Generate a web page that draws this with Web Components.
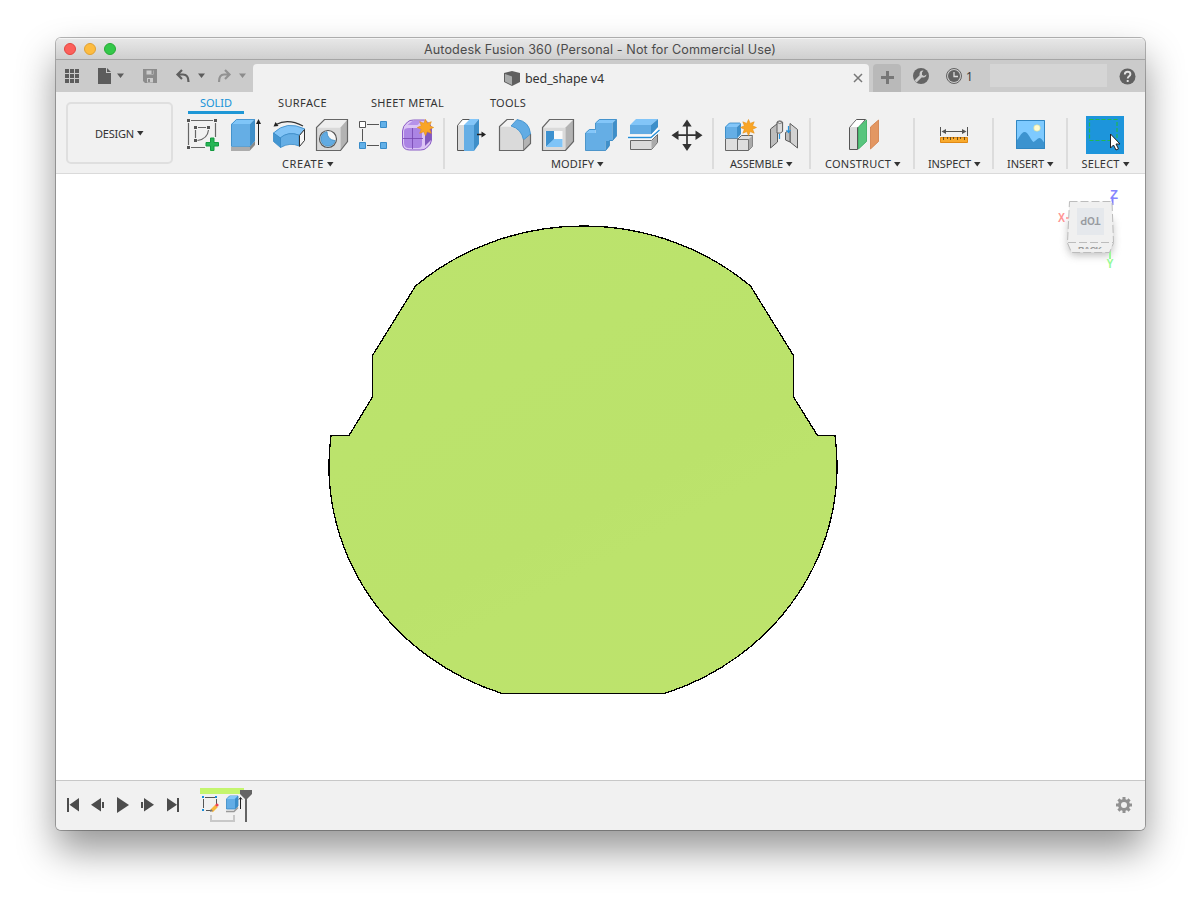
<!DOCTYPE html>
<html lang="en">
<head>
<meta charset="utf-8">
<title>Autodesk Fusion 360</title>
<style>
html,body{margin:0;background:#fff;height:904px;overflow:hidden}
body{font-family:"Noto Sans","Open Sans",sans-serif;padding:38px 56px 0;box-sizing:border-box}
</style>
</head>
<body>
<app-window>
  <title-bar><fit-label w="352">Autodesk Fusion 360 (Personal - Not for Commercial Use)</fit-label></title-bar>
  <quick-bar></quick-bar>
  <ribbon-bar>
    <ribbon-group style="width:270px" shift="-2"><fit-label slot="label" w="42">CREATE</fit-label>
      <tool-icon name="sketch" x="181"></tool-icon><tool-icon name="extrude" x="224"></tool-icon><tool-icon name="revolve" x="267"></tool-icon><tool-icon name="hole" x="310"></tool-icon><tool-icon name="pattern" x="353"></tool-icon><tool-icon name="form" x="396"></tool-icon>
    </ribbon-group>
    <ribbon-group style="width:269px" shift="-2"><fit-label slot="label" w="43">MODIFY</fit-label>
      <tool-icon name="press" x="451"></tool-icon><tool-icon name="fillet" x="494"></tool-icon><tool-icon name="shell" x="537"></tool-icon><tool-icon name="combine" x="580"></tool-icon><tool-icon name="split" x="623"></tool-icon><tool-icon name="move" x="666"></tool-icon>
    </ribbon-group>
    <ribbon-group style="width:97px" shift="-1"><fit-label slot="label" w="53">ASSEMBLE</fit-label>
      <tool-icon name="component" x="720"></tool-icon><tool-icon name="joint" x="763"></tool-icon>
    </ribbon-group>
    <ribbon-group style="width:104px"><fit-label slot="label" w="66">CONSTRUCT</fit-label><tool-icon name="plane" x="841"></tool-icon></ribbon-group>
    <ribbon-group style="width:79px"><fit-label slot="label" w="43">INSPECT</fit-label><tool-icon name="measure" x="933"></tool-icon></ribbon-group>
    <ribbon-group style="width:74px" shift="-0.5"><fit-label slot="label" w="37">INSERT</fit-label><tool-icon name="picture" x="1010"></tool-icon></ribbon-group>
    <ribbon-group style="width:75px" last><fit-label slot="label" w="38">SELECT</fit-label><tool-icon name="select" x="1084"></tool-icon></ribbon-group>
  </ribbon-bar>
  <model-view></model-view>
  <time-line></time-line>
</app-window>

<script>
const define=(name,html,ready)=>{
  const t=document.createElement('template');t.innerHTML=html;
  customElements.define(name,class extends HTMLElement{
    connectedCallback(){
      if(this.shadowRoot)return;
      this.attachShadow({mode:'open'}).append(t.content.cloneNode(true));
      if(ready)ready(this,this.shadowRoot);
    }
  });
};

define('app-window',`<style>
:host{display:flex;flex-direction:column;width:1089px;height:792px;border-radius:5px;background:#f1f1f1;box-shadow:0 0 0 1px rgba(0,0,0,.28),0 20px 38px rgba(0,0,0,.42);overflow:hidden;color:#3a3a3a}
</style><slot></slot>`);

define('title-bar',`<style>
:host{display:grid;grid-template-columns:66px 1fr 66px;align-items:center;height:21px;flex:none;background:linear-gradient(#e8e8e8,#cfcfcf);box-shadow:inset 0 1px #f5f5f5;border-bottom:1px solid #a5a5a5;font:12.6px Inter,sans-serif;color:#4b4b4b}
.lights{display:flex;gap:8px;padding-left:8px}
i{width:12px;height:12px;border-radius:50%;box-sizing:border-box;border:1px solid #e2463f;background:#fc605b}
i:nth-child(2){background:#fdbc40;border-color:#dfa033}i:nth-child(3){background:#34c84a;border-color:#27aa35}
.t{display:flex;justify-content:center;padding:1px 1px 0 0}
</style><div class="lights"><i></i><i></i><i></i></div><div class="t"><slot></slot></div><span></span>`);

define('quick-bar',`<style>
:host{display:flex;height:32px;flex:none;background:#cbcbcb;align-items:flex-end}
svg{display:block;flex:none}
.tab{width:616px;flex:none;height:28px;background:#f1f1f1;border-radius:4px 4px 0 0;display:flex;align-items:center;box-sizing:border-box;padding:0 6px 0 251px;font-size:12.5px;color:#333}
.tab svg{margin-right:4px}.tab .x{margin:0 0 0 auto}
.new{margin-left:4px;width:28px;flex:none;height:28px;background:#b9b9b9;border-radius:4px 4px 0 0}
.right{display:flex;align-items:center;height:32px;flex:1;box-sizing:border-box;padding:0 0 0 11px;font-size:12px}
.search{width:117px;flex:none;height:23px;background:#d5d5d5;margin:-1px 12px 0 0}
.n{margin-left:3px;width:24px;flex:none;font-family:"Noto Sans",sans-serif}
</style>
<svg width="197" height="32" viewBox="56 60 197 32">
<g fill="#5c5c5c"><path d="M65 69h4v4h-4zM70 69h4v4h-4zM75 69h4v4h-4zM65 74h4v4h-4zM70 74h4v4h-4zM75 74h4v4h-4zM65 79h4v4h-4zM70 79h4v4h-4zM75 79h4v4h-4z"/>
<path d="M98 68h8v5h5v11H98zM107 68l4 4h-4zM117 73.500h7l-3.500 4.500zM198 73.500h7l-3.500 4.500z"/></g>
<g fill="#8c8c8c"><path d="M143 69h14v14h-12l-2-2z"/><path fill="#cbcbcb" d="M146.500 70.500h7v4h-7zM147 78h6v4.500h-6z"/><path d="M151.500 70h1.500v4h-1.500zM148 79h2v3h-2zM239 73.500h7l-3.500 4.500z"/></g>
<g fill="none" stroke="#5f5f5f" stroke-width="2.200"><path d="M182 70l-4.500 4.500 4.500 4.500M178.500 74.500h4.500q5.500 0 5.500 7.500"/><path stroke="#929292" d="M225 70l4.500 4.500-4.500 4.500M228.500 74.500h-4.500q-5 0-5 7.500"/></g></svg>
<div class="tab"><svg width="17" height="17" viewBox="0 0 17 17"><path fill="#5f5f5f" d="M0 3l8-2 8 2v9l-8 4-8-4z"/><path fill="#a9abab" d="M1 4l7 2.500v8.500L1 11.500z"/></svg><fit-label w="79">bed_shape v4</fit-label>
<svg class="x" width="10" height="10" viewBox="0 0 10 10"><path d="M1 1l8 8M9 1l-8 8" stroke="#777" stroke-width="1.500"/></svg></div>
<div class="new"><svg width="28" height="28"><path d="M8 13.500h13M14.500 7v13" stroke="#777" stroke-width="3"/></svg></div>
<div class="right">
<svg width="18" height="18" viewBox="0 0 18 18"><circle cx="9" cy="9" r="8" fill="#646464"/><path d="M4.500 13.500L9 9" stroke="#cbcbcb" stroke-width="3" stroke-linecap="round"/><path d="M11.500 3.500a3.500 3.500 0 1 0 3 4l-2.500 1.500-2-1v-2.500z" fill="#cbcbcb"/></svg>
<svg style="margin-left:15px" width="18" height="18" viewBox="0 0 18 18"><circle cx="9" cy="9" r="7.500" fill="none" stroke="#626262"/><circle cx="9" cy="9" r="6" fill="#626262"/><path d="M9 5v4.500h4" fill="none" stroke="#ddd" stroke-width="1.300"/></svg>
<span class="n">1</span><div class="search"></div>
<svg width="17" height="17" viewBox="0 0 17 17"><circle cx="8.500" cy="8.500" r="8" fill="#616161"/><path d="M5.800 6.500q0-2.700 2.800-2.700t2.800 2.400c0 2-2.700 2-2.700 4.300M8.700 12v2" fill="none" stroke="#e2e2e2" stroke-width="1.900"/></svg>
</div>`);

define('ribbon-bar',`<style>
:host{display:flex;height:82px;flex:none;box-sizing:border-box;background:#f1f1f1;border-bottom:1px solid #dadada;font-size:11px;color:#333}
.left{width:119px;flex:none;box-sizing:border-box;padding:10px 0 0 10px}
.design{box-sizing:border-box;width:107px;height:62px;border:2px solid #dfdfdf;border-radius:5px;display:flex;align-items:center;justify-content:center;gap:3px}
.main{flex:1;min-width:0}
.tabs{display:flex;height:22px;padding-left:13px;align-items:flex-start;line-height:22px}
.tabs div{display:flex;justify-content:center}
.on{width:56px;color:#1793d8;box-sizing:border-box;height:22px;border-bottom:3px solid #1e97d6}
.groups{display:flex;height:59px}
</style><div class="left"><div class="design"><fit-label w="39">DESIGN</fit-label><svg width="7" height="5"><path d="M0 0h6.500L3.250 4.500z" fill="#333"/></svg></div></div>
<div class="main"><div class="tabs"><div class="on"><fit-label w="32">SOLID</fit-label></div><div style="margin-left:34px"><fit-label w="49">SURFACE</fit-label></div><div style="margin-left:44px"><fit-label w="73">SHEET METAL</fit-label></div><div style="margin-left:46px"><fit-label w="36">TOOLS</fit-label></div></div>
<div class="groups"><slot></slot></div></div>`);

define('ribbon-group',`<style>
:host{display:flex;flex-direction:column;flex:none;box-sizing:border-box;height:59px}
:host(:not([last])) .box{background:linear-gradient(#dcdcdc,#dcdcdc) right 0 top 4px/2px 51px no-repeat}
.box{height:59px}
.icons{display:flex;justify-content:center;height:38px;padding-top:2px}
.label{display:flex;justify-content:center;align-items:center;gap:3px;height:16px;line-height:16px;padding-top:2px}
</style><div class="box"><div class="icons"><slot></slot></div><div class="label"><slot name="label"></slot><svg width="7" height="5"><path d="M0 0h6.500L3.250 4.500z" fill="#333"/></svg></div></div>`,
(el,r)=>{const s=+el.getAttribute('shift')||0;const l=r.querySelector('.label');l.style[s<0?'paddingRight':'paddingLeft']=2*Math.abs(s)+'px';});

const star=(x,y,r)=>{let p='';for(let i=0;i<16;i++){const a=i*Math.PI/8-Math.PI/2,q=i%2?r*.55:r;p+=(i?'L':'M')+(x+q*Math.cos(a)).toFixed(1)+' '+(y+q*Math.sin(a)).toFixed(1);}return `<path d="${p}z" fill="#f9a526" stroke="#e69016" stroke-width=".6"/>`;};
const art={
sketch:`<g fill="none" stroke="#666" stroke-width="1.200"><path d="M191 120.500h22M188.500 123v22M191 147.500h14M215.500 123v14M198 127.500h8M195.500 130v8M208.500 130q-1 9-11 10.500"/></g><path fill="#555" d="M187 119h3v3h-3zM214 119h3v3h-3zM187 146h3v3h-3zM194 126h3v3h-3zM207 126h3v3h-3zM194 139h3v3h-3z"/><path d="M210.500 138h3.500v4.500h4.500v3.500h-4.500v4.500h-3.500v-4.500H206v-3.500h4.500z" fill="#26b555" stroke="#139a40"/>`,
extrude:`<path fill="#acacac" d="M231 147h18.500v4H231z"/><path fill="#888" d="M249.500 147l5.500-6v4l-5.500 6z"/><path fill="#65aee5" d="M231 124h19v22h-19z"/><path fill="#7fc5f8" d="M231 124l5.500-5h19l-5.500 5z"/><path fill="#3f8fc9" d="M250 124l5-5v22l-5 5z"/><path d="M231.500 146.500v-22l5-5h18v21l-4.500 6z" fill="none" stroke="#3b8bc6" stroke-width=".8"/><path d="M258.500 123v22" stroke="#222"/><path fill="#222" d="M256 124l2.500-5 2.500 5z"/>`,
revolve:`<path d="M276 124.500q12-6.500 27 1.500" fill="none" stroke="#333" stroke-width="1.200"/><path fill="#222" d="M273.500 126.500l2-4.500 3 4z"/><path fill="#82c4f7" stroke="#3889c5" stroke-width=".8" d="M273.500 133q13-13 31.500-4l-6 6.500q-10-5-18.500 3z"/><path fill="#65aee5" stroke="#3889c5" stroke-width=".8" d="M280 138q8-7 19-3v11q-9-4-18.500 1.500z"/><path fill="#4396d2" stroke="#3889c5" stroke-width=".8" d="M273.500 133v8.500l7 6v-9.500z"/><path fill="#f7f7f7" stroke="#333" d="M299.500 135.500l5-6v11l-5 6z"/>`,
hole:`<path fill="#d9d9d9" d="M316.500 127.500h24v23h-24z"/><path fill="#eee" d="M316.500 127.500l8-8h23l-7 8z"/><path fill="#b3b3b3" d="M340.500 127.500l7-8v22l-7 9z"/><path fill="none" stroke="#666" stroke-width="1.200" d="M316.500 150.500v-23l8-8h23v22l-7 9z"/><circle cx="328" cy="139" r="8.500" fill="#f8f8f8" stroke="#555" stroke-width="1.200"/><path fill="#62abe2" stroke="#3486be" stroke-width=".7" d="M327 131.700a7.300 7.300 0 1 0 8.200 8.900q-8-.8-8.200-8.900z"/>`,
pattern:`<path d="M367 124.500h12M362.500 129v12M367 145.500h12" stroke="#555"/><path d="M359.500 121.500h6v6h-6z" fill="#fff" stroke="#555"/><path d="M380.500 121.500h6v6h-6zM359.500 142.500h6v6h-6zM380.500 142.500h6v6h-6z" fill="#62b0e8" stroke="#388bc8"/>`,
form:`<path fill="#dcc5f5" stroke="#8a5cc6" d="M402.500 131q0-5 5-9 2-2 6-2h11q7 4 7 9v11q0 4-5 8-2 2-6 2h-11q-7 0-7-7z"/><path fill="#8259bd" d="M425 133l6-5v12l-6 6z"/><path fill="#ab84e4" d="M404 131q0-3 5-3h9q4 0 4 4v12q0 4-4 4h-9q-5 0-5-5z"/><path fill="#b692ea" d="M407.500 125l5-4h9l-4 4z"/><path d="M412.500 128v21M403 138.500h20" fill="none" stroke="#7544ae" stroke-width=".8"/>`+star(425.5,127.5,8.2),
press:`<path fill="#dadada" stroke="#555" d="M457.500 150.500v-25l5-6h7l-4 6v25z"/><path fill="#fff" d="M458.500 125l4.500-5h7l-5 5z"/><path fill="#65aee5" d="M464 125h10v26h-10z"/><path fill="#83c6f9" d="M464 125l6-6h9l-5 6z"/><path fill="#3f8fc9" d="M474 125l5-6v25l-5 7z"/><path d="M477 134.500h7" stroke="#222" stroke-width="1.400"/><path fill="#222" d="M481.500 131.500l4.500 3-4.500 3z"/>`,
fillet:`<path fill="#dadada" d="M499.500 126.500h9q12 1 15 13v11h-24z"/><path fill="#f3f3f3" d="M499.500 126.500l7-7h9l-6 7z"/><path fill="#b3b3b3" d="M523.500 140l7-6v9l-7 7.500z"/><path fill="none" stroke="#666" stroke-width="1.200" d="M514 119.500h-7l-7.500 7v24h24l7-7V134"/><path fill="#62ace4" stroke="#378bc9" stroke-width=".8" d="M511 126l6-6.500q12.500 2 13.500 14.500l-7 6q-2-11-12.500-14z"/><path d="M523.500 139v11" stroke="#888"/>`,
shell:`<path fill="#dadada" d="M542.500 127.500h23v23h-23z"/><path fill="#eee" d="M542.500 127.500l7-8h24l-8 8z"/><path fill="#b3b3b3" d="M565.500 127.500l8-8v22l-8 9z"/><path fill="none" stroke="#666" stroke-width="1.200" d="M542.500 150.500v-23l7-8h24v22l-8 9z"/><path fill="#fafafa" d="M545.500 131h17v16h-17z"/><path fill="#3d91cf" d="M546 131h8v8.500l-8 7.500z"/><path fill="#7fc4f7" d="M546 147l8-8h8.500v8z"/>`,
combine:`<path fill="#65aee5" d="M595.500 123h17v18h-7v9.500h-20V133h10z"/><path fill="#83c6f9" d="M595.500 123l4-4h17l-4 4zM585.500 133l4-4h6v4z"/><path fill="#3f8fc9" d="M612.500 123l4-4v17l-4 5zM605.500 141h4v5l-4 5z"/><path fill="none" stroke="#3587c2" stroke-width=".8" d="M595.500 129.500v-6.500l4-3.500h17V136l-4 4.500h-3v5l-4 5h-20V133l4-3.500z"/>`,
split:`<path fill="#62abe3" d="M630 125h21v9h-21z"/><path fill="#82c5f8" d="M630 125l6-6h22l-7 6z"/><path fill="#3d8fca" d="M651 125l7-6v8l-7 8z"/><path fill="#dadada" stroke="#666" d="M630.500 140.500h21l6-6v8l-6 7h-21z"/><path fill="#aaa" d="M651.500 141l5.500-5.500v7l-5.500 6.500z"/><path d="M628 137.500h23l8-8" fill="none" stroke="#fff" stroke-width="4"/><path d="M628 137.500h23l8.500-7.500" fill="none" stroke="#258dd5" stroke-width="1.300"/>`,
move:`<path d="M675 135.200h24M687 123v24" stroke="#333" stroke-width="1.700"/><path fill="#333" d="M671.500 135.200l7-4.700v9.400zM702.500 135.200l-7-4.700v9.400zM687 119.500l-4.700 7h9.400zM687 151l-4.700-7h9.400z"/>`,
component:`<path fill="#dedede" stroke="#666" d="M725.500 138.500h12v12h-12zM737.500 139.500l4-4h11v11l-4 4h-11z"/><path fill="#aaa" d="M748.500 139.500l4-4v11l-4 4z"/><path d="M738 139.500h10.500v11" fill="none" stroke="#777"/><path fill="#65aee5" d="M725 127h12v11.500h-12z"/><path fill="#83c6f9" d="M725 127l4-4h12l-4 4z"/><path fill="#3f8fc9" d="M737 127l4-4v11l-4 4.500z"/><path fill="none" stroke="#3587c2" stroke-width=".8" d="M725.500 138V127l4-4H740"/>`+star(748.5,127.5,8),
joint:`<g stroke="#5a5a5a"><path fill="#bdbdbd" d="M770.500 129l7-5.500V142l-7 6z"/><path fill="#dadada" d="M777 131.500v-9q0-1.500 2.800-1.500t2.800 1.500v9q-2 2.500-5.600 1.500z"/><path fill="#f4f4f4" stroke-width=".8" d="M777 122.500q2.800 2 5.600 0q-2.800-2.500-5.600 0z"/><path fill="#d2d2d2" d="M790 123.500l7.500 6v18.500l-7.500-6z"/><path fill="#bdbdbd" d="M785.500 132.500q1-1.500 4.500-1v10.500l-4.500-2z"/></g><path d="M779.500 134v5M788.500 126v6M786.500 130l2 2.500 2-2.500" fill="none" stroke="#2692dc" stroke-width="1.200"/>`,
plane:`<path fill="#dbdbdb" stroke="#555" d="M848.500 149.500v-22l7-8h9l-8 8v22z"/><path fill="#fff" d="M849.500 127l6-7h8l-6 7z"/><path fill="#58c57d" stroke="#31aa5b" stroke-width=".8" d="M857.500 127l8-7v21.500l-8 7.500z"/><path fill="#e39762" stroke="#d07c46" stroke-width=".8" d="M869.500 127l8-7v21.500l-8 7.500z"/>`,
measure:`<path d="M940.500 127v9M967.500 127v9M943 131.500h22" stroke="#555"/><path fill="#555" d="M941.500 131.500l4.500-2.500v5zM966.500 131.500l-4.500-2.500v5z"/><path fill="#f8aa2d" stroke="#e18914" d="M940.500 137.500h27v5h-27z"/><path d="M943.500 137v3M947.500 137v2M950.500 137v3M953.500 137v2M957.500 137v3M960.500 137v2M964.500 137v3" stroke="#704f18"/>`,
picture:`<path fill="#7ecaff" d="M1016 120h29v29h-29z"/><circle cx="1037" cy="128" r="3.300" fill="#fffbd0" stroke="#c9d898" stroke-width=".6"/><path fill="#3c93cf" d="M1016 141c3-2 5-9 8.500-9 4 0 6 8 9 10 2-1 4-4 6-4s3 3 5.500 5v6h-29z"/><path fill="none" stroke="#3186c1" d="M1016.500 120.500h28v28h-28z"/>`,
select:`<path fill="#1d95db" d="M1086 116h38v38h-38z"/><path d="M1089.500 119.500h27.500v21h-27.500z" fill="none" stroke="#21b851" stroke-width="1.200" stroke-dasharray="4 2"/><path fill="#fff" stroke="#222" d="M1110.500 134v14l3-3 2.500 5 2.500-1.200-2.500-4.800h4z"/>`
};
/* Each drawing shares one ribbon-wide coordinate space; x picks the 43px cell. */
define('tool-icon',`<style>:host{display:block;width:43px;height:38px}svg{display:block}</style><svg width="43" height="38"></svg>`,
(el,r)=>{const s=r.querySelector('svg');s.setAttribute('viewBox',el.getAttribute('x')+' 116 43 38');s.innerHTML=art[el.getAttribute('name')];});

define('view-cube',`<style>:host{display:block}svg{display:block;overflow:visible}text{font-family:"Liberation Sans",sans-serif}</style>
<svg width="80" height="95" viewBox="1050 180 80 95"><defs><filter id="f" x="-50%" y="-50%" width="200%" height="200%"><feGaussianBlur stdDeviation="4"/></filter><clipPath id="c"><path d="M1069 246h42v3h-42z"/></clipPath></defs>
<path d="M1069 220h43l1 26-3 9h-38l-4-8z" fill="#777" opacity=".5" filter="url(#f)"/>
<path d="M1112.500 197v8" stroke="#8080ff" stroke-width="2"/><path d="M1066 218h4" stroke="#ffaaaa" stroke-width="2"/><path d="M1110 250v9" stroke="#9afa9a" stroke-width="2"/>
<path fill="#f0f0f0" d="M1069.500 201.500h42.500l1.500 41-4 10h-38l-4-10z"/><path fill="#e5e8ec" d="M1077 208h27v27h-27z"/>
<path fill="none" stroke="#bcbcbc" stroke-dasharray="8 3" d="M1069.500 201.500h42.500l1.500 41h-46zM1067.500 243l4 9.500h38l4-9.500"/>
<text x="-10" y="4" font-size="11" font-weight="bold" textLength="20" lengthAdjust="spacingAndGlyphs" transform="translate(1090.500 221) rotate(180)" fill="#989ba0">TOP</text>
<g clip-path="url(#c)"><text x="1078" y="253" font-size="9" font-weight="bold" textLength="24" fill="#999">BACK</text></g>
<text x="1110" y="199" font-size="13" font-weight="bold" fill="#8585ff" textLength="8" lengthAdjust="spacingAndGlyphs">Z</text><text x="1058" y="222" font-size="13" font-weight="bold" fill="#ff9494" textLength="7" lengthAdjust="spacingAndGlyphs">X</text><text x="1106.500" y="268" font-size="13" font-weight="bold" fill="#94fa94" textLength="7" lengthAdjust="spacingAndGlyphs">Y</text></svg>`);

define('model-view',`<style>:host{display:block;position:relative;height:606px;flex:none;background:#fff}svg{display:block}view-cube{position:absolute;left:994px;top:6px}</style>
<svg width="1089" height="606" viewBox="56 174 1089 606"><defs><linearGradient id="g" gradientUnits="userSpaceOnUse" x1="440" y1="226" x2="690" y2="700"><stop offset="0" stop-color="#bce36d"/><stop offset=".3" stop-color="#bbe36c"/><stop offset=".6" stop-color="#bbe26b"/><stop offset=".7" stop-color="#bce36c"/><stop offset="1" stop-color="#bde36c"/></linearGradient></defs>
<path shape-rendering="crispEdges" fill="url(#g)" stroke="#000" stroke-width="1.300" stroke-linejoin="round" d="M415.500 286A253.300 240 0 0 1 750.500 286L793.500 355.500V397L817.500 435.500H835A253.300 240 0 0 1 664.500 693.500H502A253.300 240 0 0 1 331 435.500H349L372.500 397V355.500Z"/></svg><view-cube></view-cube>`);

define('time-line',`<style>:host{display:flex;align-items:center;justify-content:space-between;flex:1;box-sizing:border-box;border-top:1px solid #c8c8c8;background:#f1f1f1}svg{display:block}.gear{margin-bottom:1px}</style>
<svg width="210" height="49" viewBox="56 781 210 49"><g fill="#4c4c4c"><path d="M67 798h2v14h-2zM79 798v13.500l-9.500-6.700zM101 798v13.500l-10-6.700zM102 802h2v6h-2zM117 797l12 8-12 8zM141 802h2v6h-2zM144 798l10 6.800-10 6.700zM167 798l10 6.800-10 6.700zM177 798h2v14h-2z"/></g>
<path fill="#c4f56e" d="M200 788h44v6h-44z"/><g fill="none" stroke="#555"><path d="M205 797.500h10M203.500 799v9M206 810.500h5M216.500 799v5"/></g><path fill="#168bd9" d="M202 796h2v2h-2zM215 796h2v2h-2zM202 809h2v2h-2z"/><path d="M211.500 811l5-5" stroke="#f7b73c" stroke-width="3.500"/><circle cx="217" cy="805" r="1.600" fill="#ee4354"/><path fill="#777" d="M210 812l1-3 2 2z"/>
<path fill="#62ade6" stroke="#3689c5" stroke-width=".8" d="M226.500 799l3-3h8.500v10l-3 3h-8.500z"/><path fill="#84c8fa" d="M227 799l3-3h7.500l-3 3z"/><path fill="#3b8eca" d="M235 799l3-3v10l-3 3z"/><path d="M226 811.500h8l4-4" fill="none" stroke="#999" stroke-width="1.500"/><path d="M240.500 798v11M239 799.500l1.500-2 1.500 2" fill="none" stroke="#222"/>
<path d="M211 815v6h23v-6" fill="none" stroke="#c8c8c8" stroke-width="2"/><path fill="#646464" d="M240 790h12v4l-5 5v23h-2v-23l-5-5z"/></svg>
<svg class="gear" width="37" height="18" viewBox="0 0 37 18"><g transform="translate(16 9)"><circle r="4.500" fill="none" stroke="#919191" stroke-width="3"/><path stroke="#919191" stroke-width="3" d="M0-8v3M0 8v-3M-8 0h3M8 0h-3M-5.600-5.600l2 2M5.600 5.600l-2-2M-5.600 5.600l2-2M5.600-5.600l-2 2"/></g></svg>`);

define('fit-label',`<style>:host{display:block;flex:none;white-space:nowrap}span{display:inline-block}</style><span><slot></slot></span>`,
(el,r)=>{const w=+el.getAttribute('w'),s=r.querySelector('span');const n=el.textContent.length;
s.style.letterSpacing=((w-s.getBoundingClientRect().width)/n).toFixed(3)+'px';el.style.width=w+'px';});
</script>
</body>
</html>
